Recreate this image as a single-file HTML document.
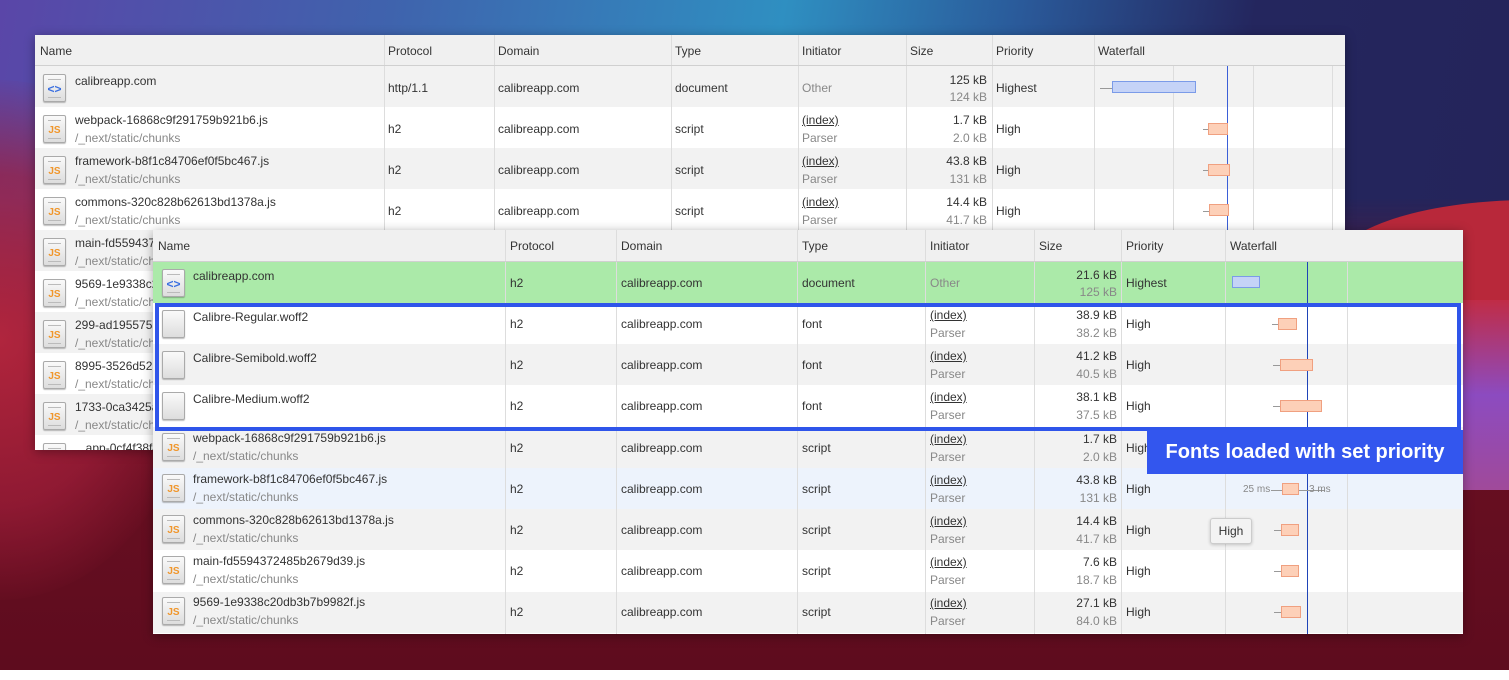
<!DOCTYPE html>
<html><head><meta charset="utf-8"><style>
*{margin:0;padding:0;box-sizing:border-box}
html,body{width:1509px;height:680px;overflow:hidden}
body{position:relative;font-family:"Liberation Sans",Arial,sans-serif;font-size:12px;color:#333;background:#fff}
.bg{position:absolute;left:0;top:0;width:1509px;height:670px;overflow:hidden;background:#6a1022}
.tbl{position:absolute;background:#fff;overflow:hidden;box-shadow:0 2px 10px rgba(0,0,0,.35)}
.hd{position:absolute;left:0;right:0;top:0;height:31px;background:#f0f0f0;border-bottom:1px solid #d0d0d0}
.r{position:absolute;left:0;right:0;height:41px}
.c{position:absolute;top:0;height:100%;border-left:1px solid #ddd}
.h{position:absolute;top:9px}
.t{position:absolute;white-space:nowrap}
.g{color:#888}
.u{text-decoration:underline;color:#333}
.ic{position:absolute;width:23px;height:28px;border:1px solid #aaa;border-radius:2px;background:linear-gradient(#fafafa,#ddd);box-shadow:0 1px 1px rgba(0,0,0,.25)}
.ic i{position:absolute;left:4px;right:4px;height:1px;background:#bbb}
.ic b{position:absolute;left:0;right:0;top:9px;text-align:center;font-size:10px;font-weight:bold;color:#f0962b;font-family:"Liberation Sans",sans-serif}
.ic.d b{color:#3a6fe0;font-size:12px;top:7px}
.bar{position:absolute;height:12px;border:1px solid #f0a080;background:#fdd0b8}
.blu{position:absolute;height:12px;border:1px solid #7b9be8;background:#c5d3f7}
.wh{position:absolute;height:1px;background:#999}
.vl{position:absolute;top:0;bottom:0;width:1px;background:#ddd}
</style></head><body>
<div class="bg">
<div style="position:absolute;left:0;top:0;width:1509px;height:670px;background:linear-gradient(180deg,#7d1428 0%,#5e0c1e 100%)"></div>
<div style="position:absolute;left:0;top:0;width:1509px;height:360px;background:linear-gradient(100deg,#5a46a8 0%,#3f63ad 25%,#2f8fc1 50%,#2a5a9a 65%,#24265e 80%,#24245a 100%);-webkit-mask-image:linear-gradient(180deg,#000 55%,transparent 100%);mask-image:linear-gradient(180deg,#000 55%,transparent 100%)"></div>
<div style="position:absolute;left:-200px;top:80px;width:400px;height:520px;border-radius:50%;background:radial-gradient(ellipse at center,rgba(180,38,62,.95) 0%,rgba(160,30,58,.7) 45%,rgba(120,20,50,0) 72%)"></div>
<div style="position:absolute;left:1330px;top:200px;width:400px;height:140px;border-radius:50% 0 0 0;background:#b8283a"></div>
<div style="position:absolute;left:1460px;top:300px;width:60px;height:190px;background:linear-gradient(#c02c46,#8c4bc0 50%,#a04a9a)"></div>
</div>

<!-- TABLE 1 -->
<div class="tbl" style="left:35px;top:35px;width:1310px;height:415px;">
<div class="hd"><span class="h" style="left:5px">Name</span><div class="c" style="left:349px"></div><span class="h" style="left:353px">Protocol</span><div class="c" style="left:459px"></div><span class="h" style="left:463px">Domain</span><div class="c" style="left:636px"></div><span class="h" style="left:640px">Type</span><div class="c" style="left:763px"></div><span class="h" style="left:767px">Initiator</span><div class="c" style="left:871px"></div><span class="h" style="left:875px">Size</span><div class="c" style="left:957px"></div><span class="h" style="left:961px">Priority</span><div class="c" style="left:1059px"></div><span class="h" style="left:1063px">Waterfall</span></div>
<div class="r" style="top:31px;background:#f2f2f2"></div>
<div class="r" style="top:72px;background:#fff"></div>
<div class="r" style="top:113px;background:#f2f2f2"></div>
<div class="r" style="top:154px;background:#fff"></div>
<div class="r" style="top:195px;background:#f2f2f2"></div>
<div class="r" style="top:236px;background:#fff"></div>
<div class="r" style="top:277px;background:#f2f2f2"></div>
<div class="r" style="top:318px;background:#fff"></div>
<div class="r" style="top:359px;background:#f2f2f2"></div>
<div class="r" style="top:400px;background:#fff"></div>
<div class="c" style="left:349px;top:31px"></div><div class="c" style="left:459px;top:31px"></div><div class="c" style="left:636px;top:31px"></div><div class="c" style="left:763px;top:31px"></div><div class="c" style="left:871px;top:31px"></div><div class="c" style="left:957px;top:31px"></div><div class="c" style="left:1059px;top:31px"></div>
<div class="vl" style="left:1138px;top:31px"></div><div class="vl" style="left:1218px;top:31px"></div><div class="vl" style="left:1297px;top:31px"></div>
<div class="vl" style="left:1192px;top:31px;background:#3b5fd8"></div>
<div class="ic d" style="left:8px;top:39px"><i style="top:4px"></i><b>&lt;&gt;</b><i style="top:22px"></i></div>
<span class="t" style="left:40px;top:39px">calibreapp.com</span>
<span class="t" style="left:353px;top:46px">http/1.1</span><span class="t" style="left:463px;top:46px">calibreapp.com</span><span class="t" style="left:640px;top:46px">document</span><span class="t g" style="left:767px;top:46px">Other</span>
<span class="t" style="right:358px;top:38px">125 kB</span><span class="t g" style="right:358px;top:55px">124 kB</span><span class="t" style="left:961px;top:46px">Highest</span>
<div class="wh" style="left:1065px;top:53px;width:12px"></div><div class="blu" style="left:1077px;top:46px;width:84px"></div>

<div class="ic" style="left:8px;top:80px"><i style="top:4px"></i><b>JS</b><i style="top:22px"></i></div>
<span class="t" style="left:40px;top:78px">webpack-16868c9f291759b921b6.js</span><span class="t g" style="left:40px;top:96px">/_next/static/chunks</span>
<span class="t" style="left:353px;top:87px">h2</span><span class="t" style="left:463px;top:87px">calibreapp.com</span><span class="t" style="left:640px;top:87px">script</span><span class="t u" style="left:767px;top:78px">(index)</span><span class="t g" style="left:767px;top:96px">Parser</span>
<span class="t" style="right:358px;top:78px">1.7 kB</span><span class="t g" style="right:358px;top:96px">2.0 kB</span><span class="t" style="left:961px;top:87px">High</span>
<div class="wh" style="left:1168px;top:94px;width:5px"></div><div class="bar" style="left:1173px;top:88px;width:20px"></div>

<div class="ic" style="left:8px;top:121px"><i style="top:4px"></i><b>JS</b><i style="top:22px"></i></div>
<span class="t" style="left:40px;top:119px">framework-b8f1c84706ef0f5bc467.js</span><span class="t g" style="left:40px;top:137px">/_next/static/chunks</span>
<span class="t" style="left:353px;top:128px">h2</span><span class="t" style="left:463px;top:128px">calibreapp.com</span><span class="t" style="left:640px;top:128px">script</span><span class="t u" style="left:767px;top:119px">(index)</span><span class="t g" style="left:767px;top:137px">Parser</span>
<span class="t" style="right:358px;top:119px">43.8 kB</span><span class="t g" style="right:358px;top:137px">131 kB</span><span class="t" style="left:961px;top:128px">High</span>
<div class="wh" style="left:1168px;top:135px;width:5px"></div><div class="bar" style="left:1173px;top:129px;width:22px"></div>

<div class="ic" style="left:8px;top:162px"><i style="top:4px"></i><b>JS</b><i style="top:22px"></i></div>
<span class="t" style="left:40px;top:160px">commons-320c828b62613bd1378a.js</span><span class="t g" style="left:40px;top:178px">/_next/static/chunks</span>
<span class="t" style="left:353px;top:169px">h2</span><span class="t" style="left:463px;top:169px">calibreapp.com</span><span class="t" style="left:640px;top:169px">script</span><span class="t u" style="left:767px;top:160px">(index)</span><span class="t g" style="left:767px;top:178px">Parser</span>
<span class="t" style="right:358px;top:160px">14.4 kB</span><span class="t g" style="right:358px;top:178px">41.7 kB</span><span class="t" style="left:961px;top:169px">High</span>
<div class="wh" style="left:1168px;top:176px;width:6px"></div><div class="bar" style="left:1174px;top:169px;width:20px"></div>

<div class="ic" style="left:8px;top:203px"><i style="top:4px"></i><b>JS</b><i style="top:22px"></i></div>
<span class="t" style="left:40px;top:201px">main-fd5594372485b2679d39.js</span><span class="t g" style="left:40px;top:219px">/_next/static/chunks</span>
<div class="ic" style="left:8px;top:244px"><i style="top:4px"></i><b>JS</b><i style="top:22px"></i></div>
<span class="t" style="left:40px;top:242px">9569-1e9338c20db3b7b9982f.js</span><span class="t g" style="left:40px;top:260px">/_next/static/chunks</span>
<div class="ic" style="left:8px;top:285px"><i style="top:4px"></i><b>JS</b><i style="top:22px"></i></div>
<span class="t" style="left:40px;top:283px">299-ad195575abc.js</span><span class="t g" style="left:40px;top:301px">/_next/static/chunks</span>
<div class="ic" style="left:8px;top:326px"><i style="top:4px"></i><b>JS</b><i style="top:22px"></i></div>
<span class="t" style="left:40px;top:324px">8995-3526d52abc.js</span><span class="t g" style="left:40px;top:342px">/_next/static/chunks</span>
<div class="ic" style="left:8px;top:367px"><i style="top:4px"></i><b>JS</b><i style="top:22px"></i></div>
<span class="t" style="left:40px;top:365px">1733-0ca3425abc.js</span><span class="t g" style="left:40px;top:383px">/_next/static/chunks</span>
<div class="ic" style="left:8px;top:408px"><i style="top:4px"></i><b>JS</b><i style="top:22px"></i></div>
<span class="t" style="left:44px;top:406px">_app-0cf4f38f4abc.js</span>
</div>

<!-- TABLE 2 -->
<div class="tbl" style="left:153px;top:230px;width:1310px;height:404px;">
<div class="hd" style="height:32px"><span class="h" style="left:5px">Name</span><div class="c" style="left:352px"></div><span class="h" style="left:357px">Protocol</span><div class="c" style="left:463px"></div><span class="h" style="left:468px">Domain</span><div class="c" style="left:644px"></div><span class="h" style="left:649px">Type</span><div class="c" style="left:772px"></div><span class="h" style="left:777px">Initiator</span><div class="c" style="left:881px"></div><span class="h" style="left:886px">Size</span><div class="c" style="left:968px"></div><span class="h" style="left:973px">Priority</span><div class="c" style="left:1072px"></div><span class="h" style="left:1077px">Waterfall</span></div>
<div class="r" style="top:32px;background:#abeaa9"></div>
<div class="r" style="top:73px;background:#fff"></div>
<div class="r" style="top:114px;background:#f2f2f2"></div>
<div class="r" style="top:156px;background:#fff"></div>
<div class="r" style="top:197px;background:#f2f2f2"></div>
<div class="r" style="top:238px;background:#edf3fc"></div>
<div class="r" style="top:279px;background:#f2f2f2"></div>
<div class="r" style="top:321px;background:#fff"></div>
<div class="r" style="top:362px;background:#f2f2f2"></div>
<div class="c" style="left:352px;top:32px"></div><div class="c" style="left:463px;top:32px"></div><div class="c" style="left:644px;top:32px"></div><div class="c" style="left:772px;top:32px"></div><div class="c" style="left:881px;top:32px"></div><div class="c" style="left:968px;top:32px"></div><div class="c" style="left:1072px;top:32px"></div>
<div class="vl" style="left:1194px;top:32px"></div>
<div class="vl" style="left:1154px;top:32px;background:#1f44b8"></div>

<div class="ic d" style="left:9px;top:39px"><i style="top:4px"></i><b>&lt;&gt;</b><i style="top:22px"></i></div>
<span class="t" style="left:40px;top:39px">calibreapp.com</span>
<span class="t" style="left:357px;top:46px">h2</span><span class="t" style="left:468px;top:46px">calibreapp.com</span><span class="t" style="left:649px;top:46px">document</span><span class="t g" style="left:777px;top:46px">Other</span>
<span class="t" style="right:346px;top:38px">21.6 kB</span><span class="t g" style="right:346px;top:55px">125 kB</span><span class="t" style="left:973px;top:46px">Highest</span>
<div class="blu" style="left:1079px;top:46px;width:28px"></div>

<div class="ic" style="left:9px;top:80px"></div>
<span class="t" style="left:40px;top:80px">Calibre-Regular.woff2</span>
<span class="t" style="left:357px;top:87px">h2</span><span class="t" style="left:468px;top:87px">calibreapp.com</span><span class="t" style="left:649px;top:87px">font</span><span class="t u" style="left:777px;top:78px">(index)</span><span class="t g" style="left:777px;top:96px">Parser</span>
<span class="t" style="right:346px;top:78px">38.9 kB</span><span class="t g" style="right:346px;top:96px">38.2 kB</span><span class="t" style="left:973px;top:87px">High</span>
<div class="wh" style="left:1119px;top:94px;width:6px"></div><div class="bar" style="left:1125px;top:88px;width:19px"></div>

<div class="ic" style="left:9px;top:121px"></div>
<span class="t" style="left:40px;top:121px">Calibre-Semibold.woff2</span>
<span class="t" style="left:357px;top:128px">h2</span><span class="t" style="left:468px;top:128px">calibreapp.com</span><span class="t" style="left:649px;top:128px">font</span><span class="t u" style="left:777px;top:119px">(index)</span><span class="t g" style="left:777px;top:137px">Parser</span>
<span class="t" style="right:346px;top:119px">41.2 kB</span><span class="t g" style="right:346px;top:137px">40.5 kB</span><span class="t" style="left:973px;top:128px">High</span>
<div class="wh" style="left:1120px;top:135px;width:7px"></div><div class="bar" style="left:1127px;top:129px;width:33px"></div>

<div class="ic" style="left:9px;top:162px"></div>
<span class="t" style="left:40px;top:162px">Calibre-Medium.woff2</span>
<span class="t" style="left:357px;top:169px">h2</span><span class="t" style="left:468px;top:169px">calibreapp.com</span><span class="t" style="left:649px;top:169px">font</span><span class="t u" style="left:777px;top:160px">(index)</span><span class="t g" style="left:777px;top:178px">Parser</span>
<span class="t" style="right:346px;top:160px">38.1 kB</span><span class="t g" style="right:346px;top:178px">37.5 kB</span><span class="t" style="left:973px;top:169px">High</span>
<div class="wh" style="left:1120px;top:176px;width:7px"></div><div class="bar" style="left:1127px;top:170px;width:42px"></div>

<div class="ic" style="left:9px;top:203px"><i style="top:4px"></i><b>JS</b><i style="top:22px"></i></div>
<span class="t" style="left:40px;top:201px">webpack-16868c9f291759b921b6.js</span><span class="t g" style="left:40px;top:219px">/_next/static/chunks</span>
<span class="t" style="left:357px;top:211px">h2</span><span class="t" style="left:468px;top:211px">calibreapp.com</span><span class="t" style="left:649px;top:211px">script</span><span class="t u" style="left:777px;top:202px">(index)</span><span class="t g" style="left:777px;top:220px">Parser</span>
<span class="t" style="right:346px;top:202px">1.7 kB</span><span class="t g" style="right:346px;top:220px">2.0 kB</span><span class="t" style="left:973px;top:211px">High</span>

<div class="ic" style="left:9px;top:244px"><i style="top:4px"></i><b>JS</b><i style="top:22px"></i></div>
<span class="t" style="left:40px;top:242px">framework-b8f1c84706ef0f5bc467.js</span><span class="t g" style="left:40px;top:260px">/_next/static/chunks</span>
<span class="t" style="left:357px;top:252px">h2</span><span class="t" style="left:468px;top:252px">calibreapp.com</span><span class="t" style="left:649px;top:252px">script</span><span class="t u" style="left:777px;top:243px">(index)</span><span class="t g" style="left:777px;top:261px">Parser</span>
<span class="t" style="right:346px;top:243px">43.8 kB</span><span class="t g" style="right:346px;top:261px">131 kB</span><span class="t" style="left:973px;top:252px">High</span>
<span class="t g" style="left:1090px;top:254px;font-size:10px">25 ms</span><div class="wh" style="left:1118px;top:260px;width:54px"></div><div class="bar" style="left:1129px;top:253px;width:17px"></div><span class="t g" style="left:1156px;top:254px;font-size:10px">3 ms</span>

<div class="ic" style="left:9px;top:285px"><i style="top:4px"></i><b>JS</b><i style="top:22px"></i></div>
<span class="t" style="left:40px;top:283px">commons-320c828b62613bd1378a.js</span><span class="t g" style="left:40px;top:301px">/_next/static/chunks</span>
<span class="t" style="left:357px;top:293px">h2</span><span class="t" style="left:468px;top:293px">calibreapp.com</span><span class="t" style="left:649px;top:293px">script</span><span class="t u" style="left:777px;top:284px">(index)</span><span class="t g" style="left:777px;top:302px">Parser</span>
<span class="t" style="right:346px;top:284px">14.4 kB</span><span class="t g" style="right:346px;top:302px">41.7 kB</span><span class="t" style="left:973px;top:293px">High</span>
<div class="wh" style="left:1121px;top:300px;width:7px"></div><div class="bar" style="left:1128px;top:294px;width:18px"></div>

<div class="ic" style="left:9px;top:326px"><i style="top:4px"></i><b>JS</b><i style="top:22px"></i></div>
<span class="t" style="left:40px;top:324px">main-fd5594372485b2679d39.js</span><span class="t g" style="left:40px;top:342px">/_next/static/chunks</span>
<span class="t" style="left:357px;top:334px">h2</span><span class="t" style="left:468px;top:334px">calibreapp.com</span><span class="t" style="left:649px;top:334px">script</span><span class="t u" style="left:777px;top:325px">(index)</span><span class="t g" style="left:777px;top:343px">Parser</span>
<span class="t" style="right:346px;top:325px">7.6 kB</span><span class="t g" style="right:346px;top:343px">18.7 kB</span><span class="t" style="left:973px;top:334px">High</span>
<div class="wh" style="left:1121px;top:341px;width:7px"></div><div class="bar" style="left:1128px;top:335px;width:18px"></div>

<div class="ic" style="left:9px;top:367px"><i style="top:4px"></i><b>JS</b><i style="top:22px"></i></div>
<span class="t" style="left:40px;top:365px">9569-1e9338c20db3b7b9982f.js</span><span class="t g" style="left:40px;top:383px">/_next/static/chunks</span>
<span class="t" style="left:357px;top:375px">h2</span><span class="t" style="left:468px;top:375px">calibreapp.com</span><span class="t" style="left:649px;top:375px">script</span><span class="t u" style="left:777px;top:366px">(index)</span><span class="t g" style="left:777px;top:384px">Parser</span>
<span class="t" style="right:346px;top:366px">27.1 kB</span><span class="t g" style="right:346px;top:384px">84.0 kB</span><span class="t" style="left:973px;top:375px">High</span>
<div class="wh" style="left:1121px;top:382px;width:7px"></div><div class="bar" style="left:1128px;top:376px;width:20px"></div>

<div style="position:absolute;left:1057px;top:288px;width:42px;height:26px;background:#f3f3f3;border:1px solid #ccc;border-radius:3px;box-shadow:0 1px 3px rgba(0,0,0,.2);text-align:center;line-height:24px">High</div>
</div>

<div style="position:absolute;left:155px;top:303px;width:1306px;height:128px;border:4px solid #2f55ea"></div>
<div style="position:absolute;left:1147px;top:430px;width:316px;height:44px;background:#3356ee;color:#fff;font-weight:bold;font-size:20px;line-height:44px;text-align:center;white-space:nowrap">Fonts loaded with set priority</div>
</body></html>
